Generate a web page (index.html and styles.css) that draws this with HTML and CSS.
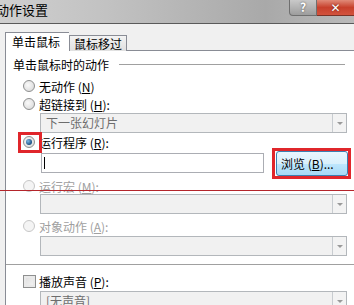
FILE: index.html
```html
<!DOCTYPE html>
<html lang="zh-CN">
<head>
    <meta charset="UTF-8">
    <title>动作设置</title>
    <link rel="stylesheet" href="styles.css">
</head>
<body>
    <!-- 标题栏 -->
    <div class="titlebar">
        <span class="title">动作设置</span>
        <div class="caption-btns">
            <div class="cap-help">?</div>
            <div class="cap-close">✕</div>
        </div>
    </div>

    <div class="dialog">
        <div class="tabs">
            <div class="tab active">单击鼠标</div>
            <div class="tab">鼠标移过</div>
        </div>
        <div class="panel">
            <div class="group-head">
                <span>单击鼠标时的动作</span>
                <div class="group-line"></div>
            </div>

            <label class="opt r1"><span class="radio"></span>无动作 (<u>N</u>)</label>
            <label class="opt r2"><span class="radio"></span>超链接到 (<u>H</u>):</label>
            <div class="combo dis"><span class="combo-txt">下一张幻灯片</span><span class="combo-arrow"></span></div>

            <label class="opt r3"><span class="radio on"></span>运行程序 (<u>R</u>):</label>
            <div class="prog-row">
                <div class="field"><span class="caret"></span></div>
                <button class="browse">浏览 (<u>B</u>)...</button>
            </div>

            <label class="opt r4 off"><span class="radio"></span>运行宏 (<u>M</u>):</label>
            <div class="combo dis"><span class="combo-txt"></span><span class="combo-arrow"></span></div>

            <label class="opt r5 off"><span class="radio"></span>对象动作 (<u>A</u>):</label>
            <div class="combo dis c3"><span class="combo-txt"></span><span class="combo-arrow"></span></div>

            <div class="sep"></div>

            <label class="opt r6"><span class="check"></span>播放声音 (<u>P</u>):</label>
            <div class="combo dis c4"><span class="combo-txt">[无声音]</span><span class="combo-arrow"></span></div>
        </div>
    </div>

    <!-- 标注 -->
    <div class="mark mark-radio"></div>
    <div class="mark mark-btn"></div>
    <div class="mark-line"></div>
</body>
</html>
```

FILE: styles.css
```css
* { margin: 0; padding: 0; box-sizing: border-box; }
body {
    width: 354px;
    height: 305px;
    overflow: hidden;
    position: relative;
    background: #f0f0f0;
    font-family: "Noto Sans CJK SC", "DejaVu Sans", sans-serif;
    font-size: 12px;
    color: #000;
}
u { text-decoration: underline; }

/* 标题栏 */
.titlebar {
    height: 24px;
    display: flex;
    justify-content: space-between;
    background: linear-gradient(to right, #cfcfcf 0%, #c2c2c2 30%, #b4b4b4 55%, #a9a9a9 75%, #b9b9b9 100%);
    border-bottom: 1px solid #5a5a5a;
}
.title { margin-left: -4px; font-size: 13px; line-height: 20px; }
.caption-btns { display: flex; align-items: flex-start; }
.cap-help {
    width: 28px;
    height: 16px;
    border: 1px solid #6f6f6f;
    border-top: none;
    border-radius: 0 0 0 4px;
    background: linear-gradient(#c9c9c9, #9d9d9d);
    color: #fff;
    font-weight: bold;
    font-size: 12px;
    line-height: 14px;
    text-align: center;
    text-shadow: 0 0 2px #444;
}
.cap-close {
    width: 37px;
    height: 16px;
    background: linear-gradient(#e08a78, #c7402c 50%, #d2533d);
    border-bottom: 1px solid #7a3226;
    color: #fff;
    font-weight: bold;
    font-size: 12px;
    line-height: 14px;
    text-align: center;
    text-shadow: 0 0 2px #5a1a10;
}

/* 选项卡 */
.dialog { padding: 8px 0 0 5px; }
.tabs { display: flex; align-items: flex-end; margin-bottom: -1px; position: relative; z-index: 1; }
.tab {
    height: 16px;
    padding: 0 4px;
    border: 1px solid #898c95;
    border-bottom: none;
    background: linear-gradient(#f3f3f3, #e0e0e0);
    line-height: 15px;
}
.tab.active {
    width: 64px;
    height: 19px;
    padding: 0 6px;
    background: #fff;
    border-right: none;
    line-height: 18px;
}
.panel {
    width: 360px;
    height: 270px;
    background: #fff;
    border-top: 1px solid #898c95;
    border-left: 1px solid #898c95;
    padding-left: 7px;
}

.group-head { width: 332px; height: 26px; display: flex; align-items: center; }
.group-line { flex: 1; height: 1px; background: #a0a0a0; margin-left: 10px; }

/* 单选、复选 */
.opt { display: flex; align-items: center; height: 16px; padding-left: 10px; }
.opt.off { color: #a0a0a0; }
.r1 { margin-top: 1px; }
.r2 { margin-top: 2px; margin-bottom: 1px; }
.r3 { margin-top: 1px; }
.r4 { margin-top: 2px; }
.r5 { margin-top: 4px; margin-bottom: 2px; }
.radio {
    width: 12px;
    height: 12px;
    margin-right: 4px;
    border-radius: 50%;
    border: 1px solid #8e8f8f;
    background: radial-gradient(circle at 40% 40%, #fafafa, #d4d4d4);
    display: flex;
    align-items: center;
    justify-content: center;
}
.radio.on::after {
    content: "";
    width: 6px;
    height: 6px;
    border-radius: 50%;
    background: radial-gradient(circle at 35% 35%, #7ab8e6, #1b4f82 70%);
}
.off .radio { border-color: #c7c7c7; background: #f4f4f4; }
.check {
    width: 13px;
    height: 13px;
    margin-right: 3px;
    border: 1px solid #8e8f8f;
    background: linear-gradient(135deg, #dcdcdc, #f6f6f6);
    box-shadow: inset 0 0 0 2px #e9e9e9;
}
.r6 { margin-top: 8px; margin-bottom: 2px; }

/* 下拉框 */
.combo {
    width: 307px;
    height: 20px;
    margin-left: 27px;
    display: flex;
    border: 1px solid #b3b7bb;
    background: #f1f1f1;
}
.combo-txt { flex: 1; color: #6d6d6d; padding-left: 5px; line-height: 18px; }
.combo-arrow {
    width: 14px;
    border-left: 1px solid #c8ccd0;
    background: #f3f3f3;
    display: flex;
    align-items: center;
    justify-content: center;
}
.combo-arrow::after {
    content: "";
    border-left: 3px solid transparent;
    border-right: 3px solid transparent;
    border-top: 3px solid #9a9a9a;
}
.c3 { }
.c4 { margin-top: 0; }

/* 程序路径 */
.prog-row { height: 26px; display: flex; align-items: center; padding-left: 28px; }
.field {
    width: 223px;
    height: 20px;
    border: 1px solid #abadb3;
    background: #fff;
    padding: 3px 0 0 2px;
}
.caret { display: block; width: 1px; height: 12px; background: #000; }
.browse {
    width: 72px;
    height: 25px;
    margin-left: 12px;
    border: 1px solid #3c7fb1;
    border-radius: 3px;
    background: linear-gradient(#eaf6fd, #d9f0fc 50%, #bee6fd 51%, #a7d9f5);
    font: inherit;
    text-align: left;
    padding-left: 4px;
}

.sep { height: 1px; background: #a0a0a0; margin: 8px 0 0 -7px; width: 360px; }

/* 红色标注 */
.mark { position: absolute; border: 3px solid #e0262b; }
.mark-radio { left: 18px; top: 132px; width: 24px; height: 21px; }
.mark-btn { left: 272px; top: 148px; width: 79px; height: 31px; }
.mark-line { position: absolute; left: 0; top: 190px; width: 354px; height: 1px; background: #b4252b; }
```
